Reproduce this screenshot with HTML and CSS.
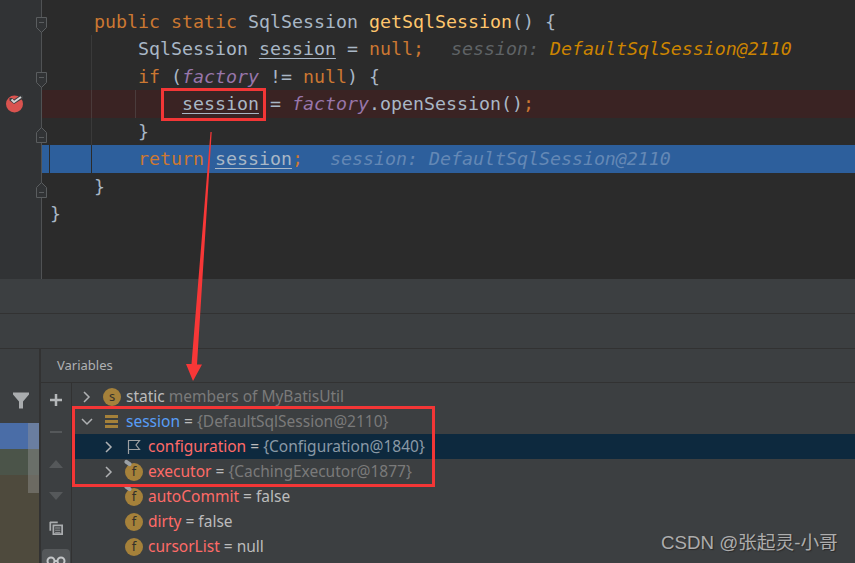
FILE: index.html
```html
<!DOCTYPE html>
<html lang="en">
<head>
<meta charset="utf-8">
<title>Debugger</title>
<link rel="stylesheet" href="styles.css">
</head>
<body>
<div class="app">
  <section class="editor">
    <div class="line g0"><span class="gutter"><svg class="fold" viewBox="0 0 11 16"><path d="M.5.5h10v10l-5 5-5-5zM3 5.500h5"/></svg></span><code class="code">    <b class="kw">public static</b> SqlSession <b class="fn">getSqlSession</b>() {</code></div>
    <div class="line g1"><span class="gutter"></span><code class="code">        SqlSession <u>session</u> = <b class="kw">null;</b>  <i class="hint">session: </i><i class="hintv">DefaultSqlSession@2110</i></code></div>
    <div class="line g1"><span class="gutter"><svg class="fold" viewBox="0 0 11 16"><path d="M.5.5h10v10l-5 5-5-5zM3 5.500h5"/></svg></span><code class="code">        <b class="kw">if</b> (<i class="st">factory</i> != <b class="kw">null</b>) {</code></div>
    <div class="line g2 bp"><span class="gutter"><svg class="bpicon" viewBox="0 0 20 20"><circle cx="8.500" cy="11" r="8.500" fill="#d9534f"/><path d="M3.500 5h2.500l2 1.500 6-4h3v3l-9 5.500-4.500-3.500z" fill="#3c3f41"/><path d="M5.500 6.500l2.500 2.500 7-5" fill="none" stroke="#d4d4d4" stroke-width="2"/></svg></span><code class="code">            <u>session</u> = <i class="st">factory</i>.openSession()<b class="kw">;</b></code></div>
    <div class="line g1"><span class="gutter"><svg class="fold" viewBox="0 0 11 16"><path d="M.5 15.500h10v-10l-5-5-5 5zM3 10.500h5"/></svg></span><code class="code">        }</code></div>
    <div class="line cur"><span class="gutter"></span><code class="code">        <b class="kw">return</b> <u>session</u><b class="kw">;</b>  <i class="hintc">session: DefaultSqlSession@2110</i></code></div>
    <div class="line"><span class="gutter"><svg class="fold" viewBox="0 0 11 16"><path d="M.5 15.500h10v-10l-5-5-5 5zM3 10.500h5"/></svg></span><code class="code">    }</code></div>
    <div class="line"><span class="gutter"></span><code class="code">}</code></div>
    <div class="rest"><span class="gutter"></span></div>
  </section>
  <div class="bar bar-a"></div>
  <div class="bar bar-b"></div>
  <section class="debug">
    <aside class="frames">
      <div class="frames-top"><svg class="filter" viewBox="0 0 16 16"><path d="M0 0h16v2L10 9v7H6V9L0 2z"/></svg></div>
      <div class="frames-list">
        <div class="frame f-blue"></div>
        <div class="frame f-green"></div>
        <div class="frame f-brown"></div>
        <div class="thumb"></div>
      </div>
    </aside>
    <div class="vars">
      <header class="vars-head">Variables</header>
      <div class="vars-body">
        <nav class="tools">
          <svg class="tool" viewBox="0 0 14 14"><path d="M7 1v12M1 7h12" stroke="#b4b7b9" stroke-width="2.500"/></svg>
          <svg class="tool" viewBox="0 0 14 14"><path d="M1 7h12" stroke="#55585a" stroke-width="2"/></svg>
          <svg class="tool" viewBox="0 0 14 14"><path d="M0 11L7 3l7 8z" fill="#55585a"/></svg>
          <svg class="tool" viewBox="0 0 14 14"><path d="M0 3l7 8 7-8z" fill="#55585a"/></svg>
          <svg class="tool" viewBox="0 0 16 16"><path d="M1 1.500h9M1.500 1v10M5 5h10v10H5z" fill="none" stroke="#a9acae" stroke-width="2"/><path d="M7 8h6M7 10.500h6M7 13h6" stroke="#a9acae"/></svg>
          <div class="tool-on"><svg class="glasses" viewBox="0 0 20 14"><circle cx="5" cy="7" r="3.500"/><circle cx="15" cy="7" r="3.500"/><path d="M8.500 7h3"/></svg></div>
        </nav>
        <div class="tree">
          <div class="row"><svg class="chev" viewBox="0 0 10 14"><path d="M2 2l5 5-5 5"/></svg><span class="badge">s</span><span class="name-plain">static</span><span class="val">&nbsp;members of MyBatisUtil</span></div>
          <div class="row"><svg class="chev" viewBox="0 0 14 10"><path d="M2 2l5 5 5-5"/></svg><svg class="stack" viewBox="0 0 14 14"><path d="M0 0h13v3H0zM0 5h13v3H0zM0 10h13v3H0z"/></svg><span class="name-blue">session</span><span class="eq">&nbsp;=&nbsp;</span><span class="val">{DefaultSqlSession@2110}</span></div>
          <div class="row sub sel"><svg class="chev" viewBox="0 0 10 14"><path d="M2 2l5 5-5 5"/></svg><svg class="flag" viewBox="0 0 14 16"><path d="M1.500 15V1.500h11L9 6l3.500 4.500h-11"/></svg><span class="name">configuration</span><span class="eq">&nbsp;=&nbsp;</span><span class="val-sel">{Configuration@1840}</span></div>
          <div class="row sub"><svg class="chev" viewBox="0 0 10 14"><path d="M2 2l5 5-5 5"/></svg><span class="badge pin">f</span><span class="name">executor</span><span class="eq">&nbsp;=&nbsp;</span><span class="val">{CachingExecutor@1877}</span></div>
          <div class="row sub leaf"><span class="badge pin">f</span><span class="name">autoCommit</span><span class="eq">&nbsp;=&nbsp;false</span></div>
          <div class="row sub leaf"><span class="badge">f</span><span class="name">dirty</span><span class="eq">&nbsp;=&nbsp;false</span></div>
          <div class="row sub leaf"><span class="badge">f</span><span class="name">cursorList</span><span class="eq">&nbsp;=&nbsp;null</span></div>
        </div>
      </div>
    </div>
  </section>
</div>
<div class="mark mark-a"></div>
<div class="mark mark-b"></div>
<svg class="arrow" viewBox="0 0 855 563"><path d="M210.500 132h1.200L197 364.500h5L193 381l-7-17h5.500z"/></svg>
<div class="watermark">CSDN @张起灵-小哥</div>
</body>
</html>
```
FILE: styles.css
```css
* { box-sizing: border-box; }
html, body { margin: 0; padding: 0; }
body {
  position: relative;
  width: 855px;
  height: 563px;
  overflow: hidden;
  background: #3c3f41;
}
.app { display: flex; flex-direction: column; height: 563px; }

/* editor */
.editor {
  height: 279px;
  padding-top: 7.5px;
  display: flex;
  flex-direction: column;
  background:
    linear-gradient(#505254, #505254) 41px 0 / 1px 8px no-repeat,
    linear-gradient(#313335, #313335) 0 0 / 42px 100% no-repeat,
    #2b2b2b;
}
.line { display: flex; height: 27.5px; flex: none; }
.gutter {
  position: relative;
  flex: none;
  width: 42px;
  background: #313335;
  border-right: 1px solid #505254;
}
.rest { flex: 1; display: flex; }
.code {
  flex: 1;
  padding-left: 8px;
  white-space: pre;
  font: 18.27px/27.5px "DejaVu Sans Mono", monospace;
  color: #a9b7c6;
}
.code b { font-weight: normal; }
.code u { text-underline-offset: 3px; text-decoration-thickness: 1px; }
.kw { color: #cc7832; }
.fn { color: #ffc66d; }
.st { color: #9876aa; }
.hint { color: #5f6366; margin-left: 5px; }
.hintv { color: #cc8400; }
.hintc { color: #6488b5; margin-left: 5px; }
.g1 .code { background: linear-gradient(#3a3a3a, #3a3a3a) 49px 0 / 1px 100% no-repeat; }
.g2 .code {
  background:
    linear-gradient(#4a3a3a, #4a3a3a) 49px 0 / 1px 100% no-repeat,
    linear-gradient(#4a3c3c, #4a3c3c) 93px 0 / 1px 100% no-repeat,
    #3a2323;
}
.cur .code {
  background:
    linear-gradient(#2b2b2b, #2b2b2b) 7px 0 / 1px 100% no-repeat,
    linear-gradient(#2b2b2b, #2b2b2b) 49px 0 / 1px 100% no-repeat,
    #2d5f9c;
}
.fold {
  position: absolute;
  left: 36px;
  top: 9.5px;
  width: 11px;
  height: 16px;
  fill: #313335;
  stroke: #5a5d5f;
}
.bpicon { position: absolute; left: 6px; top: 3px; width: 20px; height: 20px; }

/* bars */
.bar { flex: none; height: 35px; border-bottom: 1px solid #323232; }

/* debug panel */
.debug { flex: 1; display: flex; min-height: 0; }
.frames { flex: none; width: 39px; display: flex; flex-direction: column; }
.frames-top {
  height: 74px;
  padding: 43px 0 0 13px;
}
.filter { display: block; width: 16px; height: 17px; fill: #a9acae; }
.frames-list { position: relative; flex: 1; display: flex; flex-direction: column; }
.frame { flex: none; height: 26px; }
.f-blue { background: #4a6da7; }
.f-green { background: #4b5449; }
.f-brown { flex: 1; background: #4e4a3d; }
.thumb {
  position: absolute;
  right: 0;
  top: 0;
  width: 11px;
  height: 70px;
  background: rgba(150, 150, 150, 0.42);
}
.vars {
  flex: 1;
  display: flex;
  flex-direction: column;
  border-left: 2px solid #323232;
}
.vars-head {
  height: 34px;
  padding: 0 0 0 16px;
  font: 13px/33px "Noto Sans", sans-serif;
  color: #afb1b3;
  border-bottom: 1px solid #323232;
}
.vars-body { flex: 1; display: flex; min-height: 0; }
.tools {
  flex: none;
  width: 31px;
  display: flex;
  flex-direction: column;
  align-items: center;
  padding-top: 10px;
  gap: 18px;
  border-right: 1px solid #323232;
}
.tool { flex: none; width: 14px; height: 14px; }
.tool-on {
  flex: none;
  width: 28px;
  height: 30px;
  margin-top: -4px;
  padding-top: 5px;
  text-align: center;
  background: #55585a;
  border-radius: 4px 4px 0 0;
}
.glasses { width: 20px; height: 14px; fill: none; stroke: #c4c6c8; stroke-width: 2; }
.tree { flex: 1; padding-top: 1px; min-width: 0; }
.row {
  display: flex;
  align-items: center;
  height: 25px;
  padding-left: 8px;
  font: 15.5px/25px "Noto Sans", sans-serif;
  white-space: nowrap;
  color: #bbb;
}
.sub { padding-left: 30px; }
.sel { background: #0d293e; }
.leaf { padding-left: 53px; }
.chev {
  flex: none;
  width: 14px;
  height: 14px;
  margin-right: 9px;
  fill: none;
  stroke: #afb1b3;
  stroke-width: 1.500;
}
.badge {
  position: relative;
  flex: none;
  width: 18px;
  height: 18px;
  margin-right: 5px;
  border-radius: 50%;
  background: #a5813a;
  color: #33302a;
  font: 13px/17px "Noto Sans", sans-serif;
  text-align: center;
}
.pin::before {
  content: "";
  position: absolute;
  left: -1px;
  top: -2px;
  width: 8px;
  height: 4px;
  border-radius: 2px;
  background: #9aa0a6;
  transform: rotate(35deg);
}
.stack { flex: none; width: 14px; height: 14px; margin: 0 7px 0 2px; fill: #a5813a; }
.flag { flex: none; width: 14px; height: 16px; margin: 0 7px 0 2px; fill: none; stroke: #9da0a2; stroke-width: 1.200; }
.name { color: #ff6b68; }
.name-blue { color: #589df6; }
.name-plain { color: #bbb; }
.eq { color: #bbb; }
.val { color: #7a7a7a; }
.val-sel { color: #8a99a6; }

/* annotations */
.mark { position: absolute; border: 3px solid #f33636; }
.mark-a { left: 161px; top: 88px; width: 105px; height: 33px; }
.mark-b { left: 72px; top: 406px; width: 363px; height: 81px; }
.arrow { position: absolute; left: 0; top: 0; width: 855px; height: 563px; fill: #f73737; pointer-events: none; }
.watermark {
  position: absolute;
  left: 661px;
  top: 531px;
  font: 18.700px/24px "Liberation Sans", "Noto Sans CJK SC", sans-serif;
  color: #adadad;
  text-shadow: 1px 1px 1px #2a2a2a;
  white-space: nowrap;
}
```
